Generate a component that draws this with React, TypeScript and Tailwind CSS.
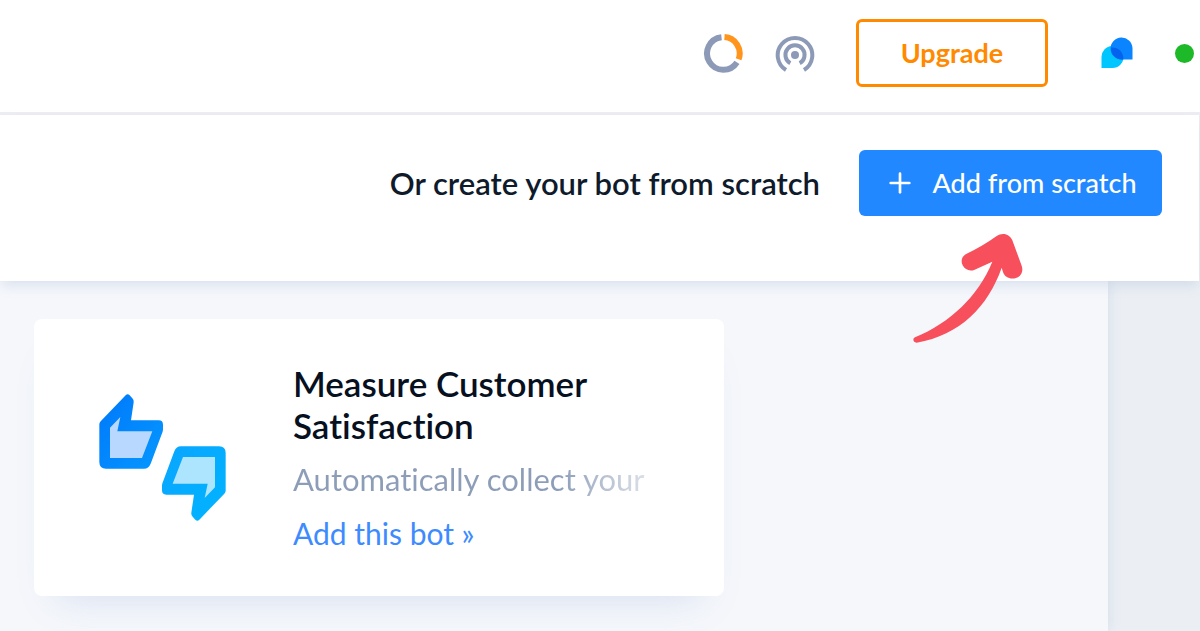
import { Plus } from "lucide-react";

const UsageIcon = () => (
  <svg viewBox="0 0 40 40" className="size-10" fill="none" strokeWidth="6">
    <path d="M18.5 4.2A16.3 16.3 0 1 0 34 29.3" stroke="#8c9ab8" />
    <path d="M21.5 4.1A16.3 16.3 0 0 1 35.6 26.2" stroke="#ff951c" />
  </svg>
);

const BroadcastIcon = () => (
  <svg viewBox="0 0 40 40" className="size-10" fill="none" stroke="#8c9ab8" strokeWidth="4">
    <path d="M11 37A17.3 17.3 0 1 1 29 37" />
    <path d="M15.3 30.2A9.6 9.6 0 1 1 24.7 30.2" />
    <circle cx="20" cy="22" r="4" fill="#8c9ab8" stroke="none" />
  </svg>
);

const Logo = () => (
  <svg viewBox="0 0 32 32" className="size-8">
    <path d="M0.5 31V20.5A11 11 0 1 1 11.5 31Z" fill="#00c6ff" />
    <path d="M31.5 22.5V11A11 11 0 1 0 20.5 22.5Z" fill="#0a84ff" />
    <path d="M10 10.5A11 11 0 0 1 22.3 22.5H20.5A11 11 0 0 1 10 10.5Z" fill="#0562ee" />
  </svg>
);

const thumb =
  "M58 130Q58 125 62 121L137 43Q143 37 149 43L157 52Q162 57 161 64L153 118H236Q249 118 249 131V146Q248 154 245 160L212 248Q206 263 192 263H78Q58 263 58 243Z";
const thumbInner = "M90 140L121 108L112 151H217L186 231H90Z";

const ThumbsIcon = () => (
  <svg viewBox="54 36 390 390" className="w-[130px] h-[130px] shrink-0">
    <defs>
      <linearGradient id="up" x1="0" y1="0" x2="1" y2="1">
        <stop offset="0" stopColor="#0078fa" />
        <stop offset="1" stopColor="#0598ff" />
      </linearGradient>
      <linearGradient id="down" x1="1" y1="1" x2="0" y2="0">
        <stop offset="0" stopColor="#0aa5ff" />
        <stop offset="1" stopColor="#00b4ff" />
      </linearGradient>
    </defs>
    <path d={thumb} fill="url(#up)" />
    <path d={thumbInner} fill="#b8d8ff" />
    <g transform="rotate(180 247.5 229.5)">
      <path d={thumb} fill="url(#down)" />
      <path d={thumbInner} fill="#ade5ff" />
    </g>
  </svg>
);

const Arrow = () => (
  <svg
    viewBox="186 276 336 336"
    className="absolute left-[53px] top-[82px] z-10 size-28 pointer-events-none"
    fill="#f74f5c"
  >
    <path d="M195 592C300 548 384 470 427 365L374 389C360 395 345 390 338 376C331 362 336 348 350 341C382 326 412 308 439 289C458 275 480 283 487 301L515 377C521 394 513 409 498 414C481 419 464 412 459 396L455 383C414 500 330 585 200 608C189 608 187 596 195 592Z" />
  </svg>
);

const App = () => {
  return (
    <div className="min-h-screen flex flex-col bg-[#ebeff4] font-['Lato',sans-serif] [font-variant-ligatures:none] overflow-hidden">
      {/* Top bar */}
      <header className="h-[115px] flex items-center justify-end pr-1.5 pb-1.5 bg-white border-b-3 border-[#ededf3]">
        <div className="flex items-center gap-8">
          <button type="button" aria-label="Usage">
            <UsageIcon />
          </button>
          <button type="button" aria-label="Broadcast">
            <BroadcastIcon />
          </button>
        </div>
        <button
          type="button"
          className="ml-[41px] w-48 h-[68px] rounded-md border-3 border-[#ff8a00] text-[27px] font-bold text-[#ff8a00]"
        >
          Upgrade
        </button>
        <a href="#" aria-label="Home" className="ml-[53px]">
          <Logo />
        </a>
        <span className="ml-[42px] size-[19px] rounded-full bg-[#1db928]" />
      </header>

      {/* Create from scratch */}
      <section className="relative z-10 h-[166px] mr-px flex items-start justify-end gap-[39px] pt-[35px] pr-[37px] bg-white shadow-[0_6px_12px_-2px_rgba(120,145,190,0.22)]">
        <p className="text-[31px] leading-[66px] font-semibold text-[#0f1a2b]">
          Or create your bot from scratch
        </p>
        <div className="relative">
          <button
            type="button"
            className="w-[303px] h-[66px] flex items-center justify-center gap-4 rounded-md bg-[#2188ff] text-[27px] font-medium text-white"
          >
            <Plus className="size-8" strokeWidth={2} />
            Add from scratch
          </button>
          <Arrow />
        </div>
      </section>

      {/* Templates */}
      <main className="flex-1 flex">
        <div className="flex-1 pt-[38px] pl-[34px] pb-[35px] bg-[#f5f7fb] shadow-[0_0_12px_rgba(120,145,190,0.2)]">
          <article className="w-[690px] h-[277px] flex items-center pl-16 rounded-lg bg-white shadow-[0_24px_36px_-24px_rgba(110,145,205,0.25)]">
            <ThumbsIcon />
            <div className="ml-[65px] w-[354px]">
              <h2 className="text-[35px] leading-[42px] font-semibold text-[#06101f]">
                Measure Customer Satisfaction
              </h2>
              <p className="mt-3 text-[31px] leading-[42px] whitespace-nowrap overflow-hidden bg-linear-to-r from-[#8d9db8] from-75% to-[#8d9db8]/30 bg-clip-text text-transparent">
                Automatically collect your
              </p>
              <a href="#" className="mt-3 block text-[30px] leading-[42px] text-[#3d8bff]">
                Add this bot »
              </a>
            </div>
          </article>
        </div>
        <aside className="w-[92px]" />
      </main>
    </div>
  );
};

export default App;
